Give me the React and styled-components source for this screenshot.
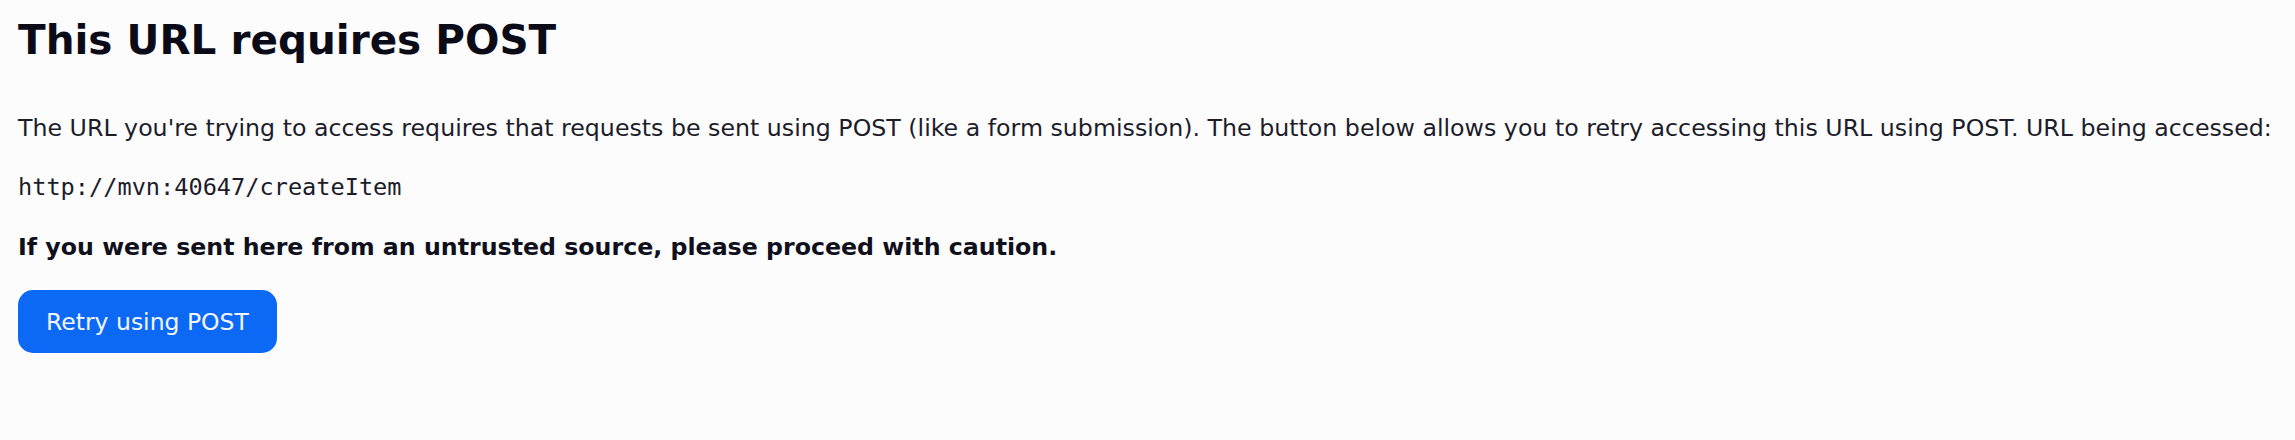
import React from "react";
import styled, { createGlobalStyle } from "styled-components";

const Global = createGlobalStyle`
  html, body {
    margin: 0;
    padding: 0;
    background: #fcfcfd;
  }
  body {
    font-family: "DejaVu Sans", "Noto Sans", sans-serif;
    color: #1d1d2a;
  }
`;

const Page = styled.main`
  display: flex;
  flex-direction: column;
  align-items: flex-start;
  padding: 17px 18px;
  min-height: 440px;
  box-sizing: border-box;
  background: #fcfcfd;
`;

const Title = styled.h1`
  margin: 0 0 51px;
  font-size: 40.5px;
  line-height: 47px;
  font-weight: 700;
  color: #0b0b17;
`;

const Text = styled.p`
  margin: 0 0 ${(p) => p.$gap ?? 31}px;
  font-size: 23.7px;
  line-height: 27px;
  font-weight: ${(p) => (p.$bold ? 700 : 400)};
  color: ${(p) => (p.$bold ? "#10101c" : "#1d1d2a")};
  white-space: nowrap;
`;

const Code = styled.pre`
  margin: 0 0 33px;
  font-family: "DejaVu Sans Mono", "Liberation Mono", monospace;
  font-size: 23.6px;
  line-height: 27px;
  color: #1d1d2a;
`;

const Button = styled.button`
  display: inline-flex;
  align-items: center;
  justify-content: center;
  height: 63px;
  padding: 0 28px;
  border: none;
  border-radius: 15px;
  background: #0b69f6;
  color: #f3f6ff;
  font-family: "DejaVu Sans", sans-serif;
  font-size: 23.5px;
  cursor: pointer;
`;

export default function App() {
  return (
    <>
      <Global />
      <Page>
        <Title>This URL requires POST</Title>
        <Text $gap={32}>
          The URL you're trying to access requires that requests be sent using
          POST (like a form submission). The button below allows you to retry
          accessing this URL using POST. URL being accessed:
        </Text>
        <Code>http://mvn:40647/createItem</Code>
        <Text $bold $gap={29}>
          If you were sent here from an untrusted source, please proceed with
          caution.
        </Text>
        <Button type="button">Retry using POST</Button>
      </Page>
    </>
  );
}
